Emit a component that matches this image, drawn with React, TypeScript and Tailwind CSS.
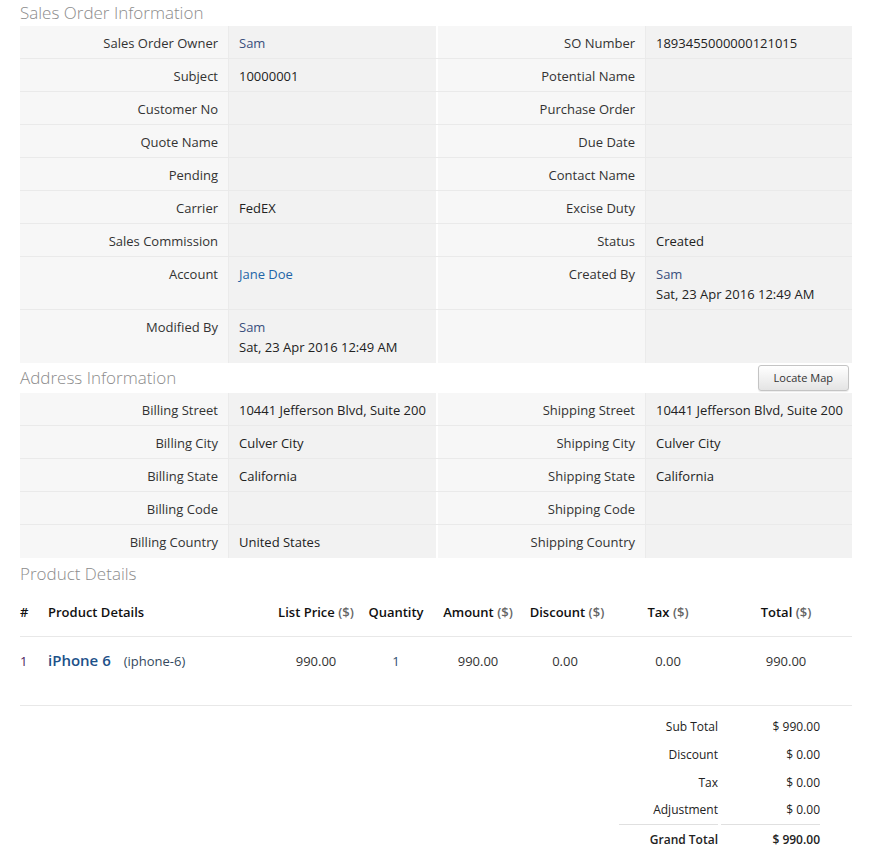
import React from 'react'

type Cell = { label: string; value?: React.ReactNode }

const font = { fontFamily: '"Open Sans", "Liberation Sans", sans-serif' }

function Title({ children, right }: { children: React.ReactNode; right?: React.ReactNode }) {
    return (
        <div className="flex items-center justify-between h-[30px]">
            <div className="text-[17px] font-light text-[#8c8c8c]">{children}</div>
            {right}
        </div>
    )
}

function InfoRow({ left, right, tall, last }: { left: Cell; right: Cell; tall?: boolean; last?: boolean }) {
    const h = tall ? 'min-h-[53px]' : 'min-h-[33px]'
    const b = last ? '' : 'border-b border-[#eaeaea]'
    return (
        <div className={`flex ${h} ${b}`}>
            <div className="w-[208px] bg-[#f7f7f7] text-right pr-[10px] pt-[7px] text-[#333]">{left.label}</div>
            <div className="w-[208px] bg-[#f2f2f2] border-l border-[#ebebeb] pl-[10px] pt-[7px] text-[#222]">{left.value}</div>
            <div className="w-[209px] bg-[#f7f7f7] border-l-2 border-white text-right pr-[10px] pt-[7px] text-[#333]">{right.label}</div>
            <div className="flex-1 bg-[#f2f2f2] border-l border-[#ebebeb] pl-[10px] pt-[7px] text-[#222]">{right.value}</div>
        </div>
    )
}

const Link = ({ children, c = 'text-[#2265a8]' }: { children: React.ReactNode; c?: string }) => <span className={c}>{children}</span>

const Dollar = () => <span className="text-[#666]">($)</span>

export default function App() {
    return (
        <div className="w-[888px] h-[850px] bg-white px-[20px] pr-[36px] text-[13px] leading-[20px] overflow-hidden" style={font}>
            <div className="h-[25px] flex items-center">
                <div className="text-[17px] font-light text-[#8c8c8c]">Sales Order Information</div>
            </div>
            <div className="mt-[1px]">
                <InfoRow left={{ label: 'Sales Order Owner', value: <Link c="text-[#3a4f7d]">Sam</Link> }} right={{ label: 'SO Number', value: '1893455000000121015' }} />
                <InfoRow left={{ label: 'Subject', value: '10000001' }} right={{ label: 'Potential Name' }} />
                <InfoRow left={{ label: 'Customer No' }} right={{ label: 'Purchase Order' }} />
                <InfoRow left={{ label: 'Quote Name' }} right={{ label: 'Due Date' }} />
                <InfoRow left={{ label: 'Pending' }} right={{ label: 'Contact Name' }} />
                <InfoRow left={{ label: 'Carrier', value: 'FedEX' }} right={{ label: 'Excise Duty' }} />
                <InfoRow left={{ label: 'Sales Commission' }} right={{ label: 'Status', value: 'Created' }} />
                <InfoRow
                    tall
                    left={{ label: 'Account', value: <Link>Jane Doe</Link> }}
                    right={{
                        label: 'Created By',
                        value: (
                            <>
                                <Link c="text-[#3a4f7d]">Sam</Link>
                                <div>Sat, 23 Apr 2016 12:49 AM</div>
                            </>
                        ),
                    }}
                />
                <InfoRow
                    tall
                    last
                    left={{
                        label: 'Modified By',
                        value: (
                            <>
                                <Link c="text-[#3a4f7d]">Sam</Link>
                                <div>Sat, 23 Apr 2016 12:49 AM</div>
                            </>
                        ),
                    }}
                    right={{ label: '' }}
                />
            </div>

            <Title
                right={
                    <button className="h-[26px] px-[15px] mr-[3px] rounded-[3px] border border-[#c4c4c4] bg-gradient-to-b from-white to-[#e4e4e4] text-[11px] text-[#333] shadow-[0_1px_1px_rgba(0,0,0,0.08)]">
                        Locate Map
                    </button>
                }
            >
                Address Information
            </Title>
            <div>
                <InfoRow left={{ label: 'Billing Street', value: '10441 Jefferson Blvd, Suite 200' }} right={{ label: 'Shipping Street', value: '10441 Jefferson Blvd, Suite 200' }} />
                <InfoRow left={{ label: 'Billing City', value: 'Culver City' }} right={{ label: 'Shipping City', value: 'Culver City' }} />
                <InfoRow left={{ label: 'Billing State', value: 'California' }} right={{ label: 'Shipping State', value: 'California' }} />
                <InfoRow left={{ label: 'Billing Code' }} right={{ label: 'Shipping Code' }} />
                <InfoRow last left={{ label: 'Billing Country', value: 'United States' }} right={{ label: 'Shipping Country' }} />
            </div>

            <div className="h-[32px] flex items-center">
                <div className="text-[17px] font-light text-[#8c8c8c]">Product Details</div>
            </div>
            <table className="w-full border-collapse table-fixed">
                <colgroup>
                    <col className="w-[28px]" />
                    <col className="w-[222px]" />
                    <col className="w-[92px]" />
                    <col className="w-[68px]" />
                    <col className="w-[96px]" />
                    <col className="w-[82px]" />
                    <col className="w-[120px]" />
                    <col />
                </colgroup>
                <thead>
                    <tr className="h-[46px] border-b border-[#e8e8e8] text-[#111] align-middle">
                        <th className="text-left font-semibold pb-[2px]">#</th>
                        <th className="text-left font-semibold pb-[2px]">Product Details</th>
                        <th className="font-semibold pb-[2px]">List Price <Dollar /></th>
                        <th className="font-semibold pb-[2px]">Quantity</th>
                        <th className="font-semibold pb-[2px]">Amount <Dollar /></th>
                        <th className="font-semibold pb-[2px]">Discount <Dollar /></th>
                        <th className="font-semibold pb-[2px]">Tax <Dollar /></th>
                        <th className="font-semibold pb-[2px] pr-[8px]">Total <Dollar /></th>
                    </tr>
                </thead>
                <tbody>
                    <tr className="h-[69px] border-b border-[#e8e8e8] align-top text-[#333]">
                        <td className="pt-[14px] text-[#4b1a5e]">1</td>
                        <td className="pt-[13px]">
                            <span className="text-[15px] font-semibold text-[#1d5189]">iPhone 6</span>
                            <span className="ml-[13px] text-[#34495e]">(iphone-6)</span>
                        </td>
                        <td className="pt-[14px] text-center">990.00</td>
                        <td className="pt-[14px] text-center text-[#2f4f6f]">1</td>
                        <td className="pt-[14px] text-center">990.00</td>
                        <td className="pt-[14px] text-center pr-[4px]">0.00</td>
                        <td className="pt-[14px] text-center">0.00</td>
                        <td className="pt-[14px] text-center pr-[8px]">990.00</td>
                    </tr>
                </tbody>
            </table>

            <div className="flex justify-end pr-[32px] pt-[7px] text-[12px] text-[#222]">
                <div className="grid grid-cols-[99px_99px] gap-x-[3px]">
                    <div className="h-[28px] flex items-center justify-end">Sub Total</div>
                    <div className="h-[28px] flex items-center justify-end">$ 990.00</div>
                    <div className="h-[28px] flex items-center justify-end">Discount</div>
                    <div className="h-[28px] flex items-center justify-end">$ 0.00</div>
                    <div className="h-[28px] flex items-center justify-end">Tax</div>
                    <div className="h-[28px] flex items-center justify-end">$ 0.00</div>
                    <div className="h-[28px] flex items-center justify-end border-b border-[#e0e0e0]">Adjustment</div>
                    <div className="h-[28px] flex items-center justify-end border-b border-[#e0e0e0]">$ 0.00</div>
                    <div className="h-[30px] flex items-center justify-end font-semibold">Grand Total</div>
                    <div className="h-[30px] flex items-center justify-end font-semibold">$ 990.00</div>
                </div>
            </div>
        </div>
    )
}
